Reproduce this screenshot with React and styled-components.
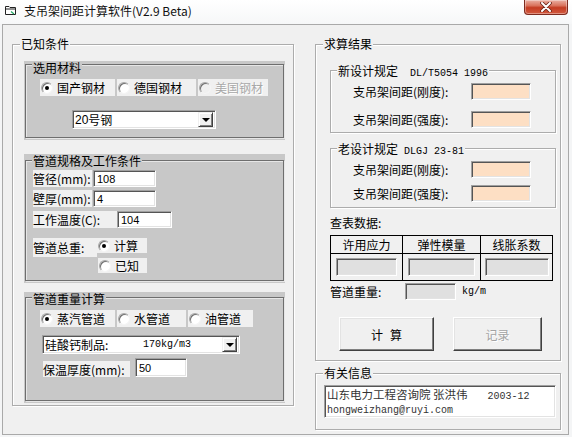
import styled, { createGlobalStyle } from 'styled-components'

const GlobalStyle = createGlobalStyle`
  html, body { margin: 0; padding: 0; background: #f4f5f6; }
  body {
    font-family: "Noto Sans CJK SC", "DejaVu Sans", sans-serif;
    font-size: 12px;
    color: #000;
  }
  * { box-sizing: border-box; }
`

const Window = styled.div`
  width: 572px;
  height: 437px;
  display: flex;
  flex-direction: column;
  background: #f4f5f6;
  overflow: hidden;
`

const TitleBar = styled.div`
  height: 24px;
  display: flex;
  align-items: flex-start;
  background: linear-gradient(#ffffff, #f6f7f8);
`

const AppIcon = styled.svg`
  margin: 5px 0 0 5px;
  flex: none;
`

const Title = styled.div`
  margin-left: 8px;
  line-height: 22px;
  font-size: 12px;
  color: #111;
  white-space: nowrap;
`

const CloseBtn = styled.div`
  margin-left: auto;
  margin-right: 4px;
  width: 44px;
  height: 15px;
  border: 1px solid #7d2b1f;
  border-top: none;
  border-radius: 0 0 4px 4px;
  background: linear-gradient(#eab0a3 0%, #d9735d 40%, #c43c22 55%, #d25a40 100%);
  display: flex;
  align-items: center;
  justify-content: center;
  box-shadow: inset 0 0 0 1px rgba(255, 255, 255, 0.35);
`

const Client = styled.div`
  margin: 0 3px 0 2px;
  height: 411px;
  border: 1px solid #a9a9a9;
  background: #f0f0f0;
  display: flex;
  align-items: flex-start;
  gap: 21px;
  padding: 19px 0 0 9px;
`

const RightColumn = styled.div`
  display: flex;
  flex-direction: column;
  gap: 12px;
`

const Frame = styled.div`
  width: ${p => p.$w}px;
  height: ${p => p.$h}px;
  margin: ${p => p.$m || '0'};
  border: 1px solid ${p => (p.$dark ? '#6e6e6e' : '#acacac')};
  box-shadow: ${p => (p.$dark ? '1px 1px 0 #e6e6e6, inset 1px 1px 0 #e6e6e6' : '1px 1px 0 #fff, inset 1px 1px 0 #fff')};
  display: flex;
  flex-direction: column;
  align-items: flex-start;
`

const Legend = styled.div`
  margin: ${p => -p.$lift}px 0 0 ${p => p.$x}px;
  padding: 0 1px;
  height: 14px;
  line-height: 14px;
  background: ${p => (p.$gray ? '#c8c8c8' : '#f0f0f0')};
  white-space: nowrap;
`

const Mono = styled.span`
  font-family: "Liberation Mono", "DejaVu Sans Mono", monospace;
  font-size: 10px;
  margin-left: ${p => p.$ml || 0}px;
`

const Panel = styled.div`
  width: 261px;
  height: ${p => p.$h}px;
  margin: ${p => p.$mt}px 0 0 11px;
  padding: ${p => p.$pt}px 0 0 1px;
  background: #c8c8c8;
`

const RadioRow = styled.div`
  display: flex;
  gap: 2px;
  margin: ${p => p.$m};
`

const RadioItem = styled.div`
  width: ${p => p.$w}px;
  height: ${p => p.$h || 17}px;
  margin-left: ${p => p.$ml || 0}px;
  display: flex;
  align-items: center;
  gap: 4px;
  padding-left: 1px;
  background: #f0f0f0;
  white-space: nowrap;
  color: ${p => (p.$disabled ? '#a8a8a8' : '#000')};
  text-shadow: ${p => (p.$disabled ? '1px 1px 0 #fff' : 'none')};
`

const RadioDot = styled.span`
  position: relative;
  flex: none;
  width: 12px;
  height: 12px;
  border-radius: 50%;
  background: ${p => (p.$disabled ? '#f0f0f0' : '#fff')};
  border: 1px solid;
  border-color: #a8a8a8 #f4f4f4 #f4f4f4 #a8a8a8;
  box-shadow: inset 1px 1px 0 #707070;
  &::after {
    content: '';
    display: ${p => (p.$on ? 'block' : 'none')};
    position: absolute;
    left: 3px;
    top: 3px;
    width: 4px;
    height: 4px;
    border-radius: 50%;
    background: #000;
  }
`

const Field = styled.div`
  width: ${p => p.$w}px;
  height: ${p => p.$h || 17}px;
  margin-left: ${p => p.$ml || 0}px;
  flex: none;
  background: ${p => p.$bg || '#fff'};
  border: 1px solid;
  border-color: #a0a0a0 #fff #fff #a0a0a0;
  box-shadow: inset 1px 1px 0 #555, inset -1px -1px 0 #e3e3e3;
  padding-left: 3px;
  display: flex;
  align-items: center;
  font-family: "Liberation Sans", Arial, sans-serif;
  font-size: 11px;
`

const Select = styled(Field)`
  margin: ${p => p.$m};
  height: 19px;
  padding: 0 2px 0 2px;
  font-family: "Noto Sans CJK SC", sans-serif;
  font-size: 12px;
  white-space: nowrap;
`

const SelectText = styled.span`
  flex: 1;
  display: flex;
  align-items: center;
`

const Digits = styled.span`
  font-family: "Liberation Sans", Arial, sans-serif;
`

const SelectName = styled.span`
  width: 98px;
`

const DropBtn = styled.span`
  flex: none;
  width: 15px;
  height: 15px;
  background: #f0f0f0;
  border: 1px solid;
  border-color: #f0f0f0 #404040 #404040 #f0f0f0;
  box-shadow: inset 1px 1px 0 #fff, inset -1px -1px 0 #808080;
  display: flex;
  align-items: center;
  justify-content: center;
  &::after {
    content: '';
    border-left: 4px solid transparent;
    border-right: 4px solid transparent;
    border-top: 4px solid #000;
  }
`

const Rows = styled.div`
  display: flex;
  flex-direction: column;
  padding-left: ${p => p.$pl}px;
`

const Row = styled.div`
  display: flex;
  align-items: ${p => p.$align || 'center'};
  margin-top: ${p => p.$mt}px;
  margin-left: ${p => p.$ml || 0}px;
`

const Label = styled.div`
  width: ${p => p.$w}px;
  height: ${p => p.$h || 17}px;
  flex: none;
  display: flex;
  align-items: ${p => (p.$top ? 'flex-start' : 'center')};
  padding-top: ${p => (p.$top ? 1 : 0)}px;
  background: ${p => (p.$plain ? 'transparent' : '#f0f0f0')};
  white-space: nowrap;
`

const RadioColumn = styled.div`
  display: flex;
  flex-direction: column;
  gap: 5px;
`

const Caption = styled.div`
  margin: ${p => p.$m};
  line-height: 14px;
`

const Table = styled.div`
  margin: 5px 0 0 14px;
  width: 223px;
  height: 46px;
  border: 1px solid #000;
  display: grid;
  grid-template-columns: 71px 78px 72px;
  grid-template-rows: 18px 26px;
`

const HeadCell = styled.div`
  display: flex;
  align-items: center;
  justify-content: center;
  border-bottom: 1px solid #000;
  border-left: ${p => (p.$first ? 'none' : '1px solid #000')};
`

const BodyCell = styled.div`
  display: flex;
  align-items: center;
  justify-content: center;
  border-left: ${p => (p.$first ? 'none' : '1px solid #000')};
`

const ButtonRow = styled.div`
  display: flex;
  gap: 19px;
  margin: 17px 0 0 23px;
`

const PushButton = styled.button`
  width: ${p => p.$w}px;
  height: 34px;
  padding: 0;
  background: #f0f0f0;
  border: 1px solid;
  border-color: #fff #404040 #404040 #fff;
  box-shadow: inset -1px -1px 0 #808080, inset 1px 1px 0 #e3e3e3;
  font-family: "Noto Sans CJK SC", sans-serif;
  font-size: 12px;
  letter-spacing: ${p => p.$spread || 0}px;
  text-indent: ${p => p.$spread || 0}px;
  color: ${p => (p.disabled ? '#a3a3a3' : '#000')};
  text-shadow: ${p => (p.disabled ? '1px 1px 0 #fff' : 'none')};
  white-space: pre;
`

const InfoBox = styled.div`
  margin: 5px 0 0 8px;
  width: 232px;
  height: 33px;
  background: #fff;
  border: 1px solid;
  border-color: #a0a0a0 #fff #fff #a0a0a0;
  box-shadow: inset 1px 1px 0 #555, inset -1px -1px 0 #e3e3e3;
  padding: 1px 0 0 2px;
  color: #333;
  display: flex;
  flex-direction: column;
`

const InfoLine = styled.div`
  height: 14px;
  line-height: 14px;
  font-size: 11.5px;
  white-space: pre;
`

export default function App() {
  return (
    <>
      <GlobalStyle />
      <Window>
        <TitleBar>
          <AppIcon width="11" height="11" viewBox="0 0 11 11">
            <path d="M0.5 1.5 H4 L5 2.5 H10.5 V9.5 H0.5 Z" fill="#fff" stroke="#222" />
            <path d="M0.5 4 H10.5" stroke="#222" />
            <path d="M6 6.5 L9 9" stroke="#2a6" strokeWidth="1.2" />
          </AppIcon>
          <Title>支吊架间距计算软件(V2.9 Beta)</Title>
          <CloseBtn>
            <svg width="12" height="10" viewBox="0 0 12 10">
              <path d="M2 1 L10 9 M10 1 L2 9" stroke="#6b2418" strokeWidth="3.6" strokeLinecap="round" />
              <path d="M2 1 L10 9 M10 1 L2 9" stroke="#fff" strokeWidth="2" strokeLinecap="round" />
            </svg>
          </CloseBtn>
        </TitleBar>

        <Client>
          <Frame $w={282} $h={362}>
            <Legend $lift={8} $x={7}>已知条件</Legend>

            <Panel $h={79} $mt={10} $pt={3}>
              <Frame $dark $w={259} $h={74}>
                <Legend $gray $lift={4} $x={6}>选用材料</Legend>
                <RadioRow $m="4px 0 0 14px">
                  <RadioItem $w={75}><RadioDot $on />国产钢材</RadioItem>
                  <RadioItem $w={79}><RadioDot />德国钢材</RadioItem>
                  <RadioItem $w={70} $disabled><RadioDot $disabled />美国钢材</RadioItem>
                </RadioRow>
                <Select $w={144} $m="14px 0 0 46px">
                  <SelectText><Digits>20</Digits>号钢</SelectText>
                  <DropBtn />
                </Select>
              </Frame>
            </Panel>

            <Panel $h={129} $mt={14} $pt={6}>
              <Frame $dark $w={259} $h={121}>
                <Legend $gray $lift={7} $x={6}>管道规格及工作条件</Legend>
                <Rows $pl={7}>
                  <Row $mt={2}>
                    <Label $w={59}>管径(mm):</Label>
                    <Field $w={63} $ml={1}>108</Field>
                  </Row>
                  <Row $mt={3}>
                    <Label $w={59}>壁厚(mm):</Label>
                    <Field $w={63} $ml={1}>4</Field>
                  </Row>
                  <Row $mt={4}>
                    <Label $w={84}>工作温度(C):</Label>
                    <Field $w={55}>104</Field>
                  </Row>
                  <Row $mt={10} $align="flex-start">
                    <Label $w={64} $h={19} $top>管道总重:</Label>
                    <RadioColumn>
                      <RadioItem $w={50} $h={15}><RadioDot $on />计算</RadioItem>
                      <RadioItem $w={49} $h={15} $ml={1}><RadioDot />已知</RadioItem>
                    </RadioColumn>
                  </Row>
                </Rows>
              </Frame>
            </Panel>

            <Panel $h={111} $mt={9} $pt={5}>
              <Frame $dark $w={259} $h={104}>
                <Legend $gray $lift={6} $x={6}>管道重量计算</Legend>
                <RadioRow $m="4px 0 0 14px">
                  <RadioItem $w={75}><RadioDot $on />蒸汽管道</RadioItem>
                  <RadioItem $w={69}><RadioDot />水管道</RadioItem>
                  <RadioItem $w={65}><RadioDot />油管道</RadioItem>
                </RadioRow>
                <Select $w={198} $m="8px 0 0 16px">
                  <SelectText>
                    <SelectName>硅酸钙制品:</SelectName>
                    <Mono>170kg/m3</Mono>
                  </SelectText>
                  <DropBtn />
                </Select>
                <Row $mt={4} $ml={17} $align="flex-end">
                  <Label $w={87} $h={16}>保温厚度(mm):</Label>
                  <Field $w={52} $h={19} $ml={5}>50</Field>
                </Row>
              </Frame>
            </Panel>
          </Frame>

          <RightColumn>
            <Frame $w={246} $h={317}>
              <Legend $lift={8} $x={7}>求算结果</Legend>

              <Frame $w={226} $h={63} $m="19px 0 0 14px">
                <Legend $lift={7} $x={6}>新设计规定<Mono $ml={12}>DL/T5054 1996</Mono></Legend>
                <Rows $pl={22}>
                  <Row $mt={5}><Label $w={118} $plain>支吊架间距(刚度):</Label><Field $w={60} $bg="#fddfc4" /></Row>
                  <Row $mt={11}><Label $w={118} $plain>支吊架间距(强度):</Label><Field $w={60} $bg="#fddfc4" /></Row>
                </Rows>
              </Frame>

              <Frame $w={226} $h={60} $m="15px 0 0 14px">
                <Legend $lift={7} $x={6}>老设计规定<Mono $ml={6}>DLGJ 23-81</Mono></Legend>
                <Rows $pl={22}>
                  <Row $mt={5}><Label $w={118} $plain>支吊架间距(刚度):</Label><Field $w={60} $bg="#fddfc4" /></Row>
                  <Row $mt={7}><Label $w={118} $plain>支吊架间距(强度):</Label><Field $w={60} $bg="#fddfc4" /></Row>
                </Rows>
              </Frame>

              <Caption $m="8px 0 0 14px">查表数据:</Caption>
              <Table>
                <HeadCell $first>许用应力</HeadCell>
                <HeadCell>弹性模量</HeadCell>
                <HeadCell>线胀系数</HeadCell>
                <BodyCell $first><Field $w={61} $h={18} $bg="#e0e0e0" /></BodyCell>
                <BodyCell><Field $w={67} $h={18} $bg="#e0e0e0" /></BodyCell>
                <BodyCell><Field $w={64} $h={18} $bg="#e0e0e0" /></BodyCell>
              </Table>

              <Row $mt={2} $ml={14}>
                <Label $w={75} $plain>管道重量:</Label>
                <Field $w={51} $bg="#e0e0e0" />
                <Mono $ml={6}>kg/m</Mono>
              </Row>

              <ButtonRow>
                <PushButton $w={95} $spread={7}>计算</PushButton>
                <PushButton $w={89} disabled>记录</PushButton>
              </ButtonRow>
            </Frame>

            <Frame $w={246} $h={57}>
              <Legend $lift={8} $x={7}>有关信息</Legend>
              <InfoBox>
                <InfoLine>山东电力工程咨询院 张洪伟<Mono $ml={20}>2003-12</Mono></InfoLine>
                <InfoLine><Mono>hongweizhang@ruyi.com</Mono></InfoLine>
              </InfoBox>
            </Frame>
          </RightColumn>
        </Client>
      </Window>
    </>
  )
}
